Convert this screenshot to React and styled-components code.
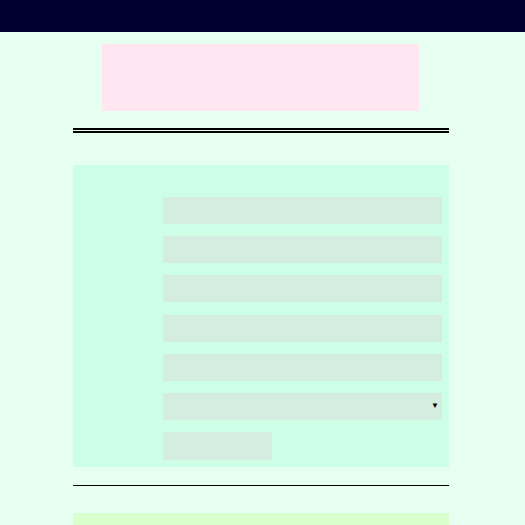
import styled, { createGlobalStyle } from "styled-components";

const GlobalStyle = createGlobalStyle`
  html, body {
    margin: 0;
    padding: 0;
    background: #e6fff0;
    font-family: "Liberation Sans", Arial, sans-serif;
  }
`;

const Header = styled.header`
  height: 32px;
  background: #000030;
`;

const Main = styled.main`
  width: 376px;
  margin: 0 0 0 73px;
  display: flex;
  flex-direction: column;
`;

const Banner = styled.div`
  width: 317px;
  height: 67px;
  margin: 12px 0 0 29px;
  background: #ffe6f0;
`;

const DoubleRule = styled.hr`
  margin: 17px 0 0;
  height: 0;
  border: none;
  border-top: 5px double #000;
`;

const Rule = styled.hr`
  margin: 18px 0 0;
  height: 0;
  border: none;
  border-top: 1.5px solid #000;
`;

const Panel = styled.form`
  margin-top: 32px;
  background: #ccffe6;
  padding: 32px 7px 7px 90px;
  display: flex;
  flex-direction: column;
  gap: 12.2px;
`;

const Field = styled.div`
  height: 27px;
  background: #d4ede0;
  display: flex;
  align-items: center;
  justify-content: flex-end;
  padding-right: 3px;
`;

const Arrow = styled.span`
  font-size: 8px;
  color: #000;
  line-height: 1;
`;

const Button = styled.div`
  width: 109px;
  height: 28px;
  background: #d4ede0;
`;

const Footer = styled.div`
  margin-top: 27px;
  height: 20px;
  background: #d9ffcc;
`;

export default function App() {
  return (
    <>
      <GlobalStyle />
      <Header />
      <Main>
        <Banner />
        <DoubleRule />
        <Panel>
          <Field />
          <Field />
          <Field />
          <Field />
          <Field />
          <Field>
            <Arrow>▼</Arrow>
          </Field>
          <Button />
        </Panel>
        <Rule />
        <Footer />
      </Main>
    </>
  );
}
